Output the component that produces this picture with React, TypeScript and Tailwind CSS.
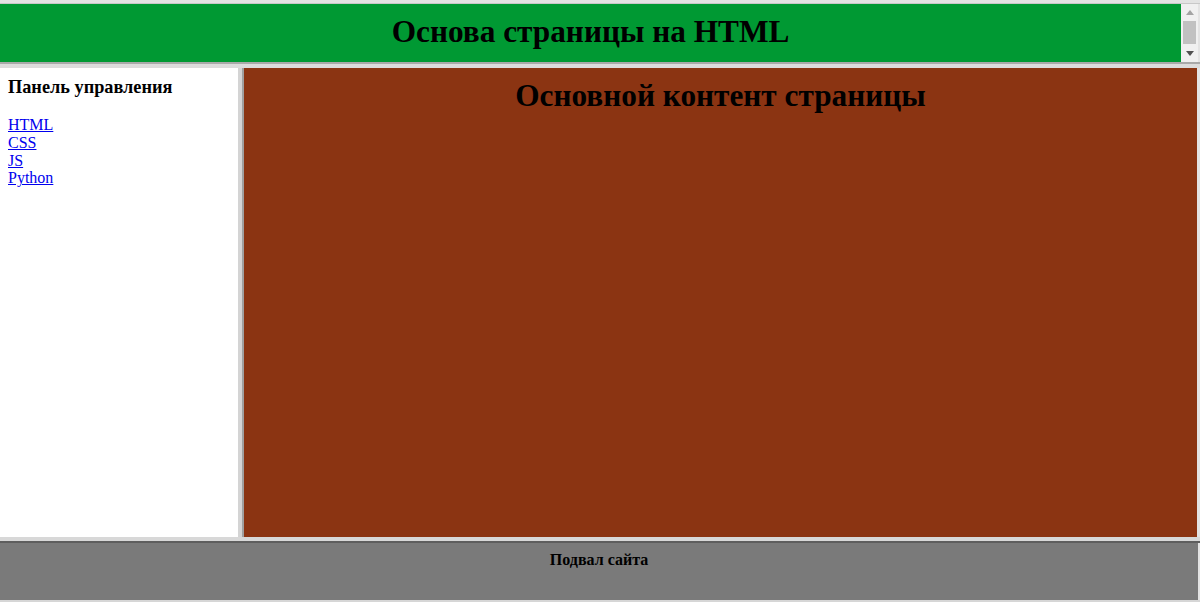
import React from 'react';

const LINKS = ['HTML', 'CSS', 'JS', 'Python'];

const serif = { fontFamily: '"Liberation Serif", "Times New Roman", serif' };

/**
 * Fake classic scrollbar for the header frame
 */
const FrameScrollbar: React.FC = () => (
    <div className="relative flex h-full w-[17px] flex-col items-center bg-[#f0f0f0]">
        <div className="flex h-[17px] w-full items-center justify-center">
            <svg width="8" height="5" viewBox="0 0 8 5">
                <path d="M0 5 L4 0 L8 5 Z" fill="#a3a3a3" />
            </svg>
        </div>
        <div className="h-[23px] w-[13px] bg-[#c1c1c1]" />
        <div className="flex flex-1 items-end justify-center pb-[6px]">
            <svg width="8" height="5" viewBox="0 0 8 5">
                <path d="M0 0 L8 0 L4 5 Z" fill="#505050" />
            </svg>
        </div>
    </div>
);

export default function App() {
    return (
        <div className="flex h-[602px] w-[1200px] flex-col bg-[#e3e3e3]" style={serif}>
            {/* top edge */}
            <div className="h-[4px] border-b border-[#c8c8c8]" />

            {/* header frame */}
            <div className="mr-[2px] flex h-[58px]">
                <div className="flex-1 bg-[#009933] pt-[9.5px] text-center">
                    <h1 className="text-[31.3px] font-bold leading-[36.8px] text-black">Основа страницы на HTML</h1>
                </div>
                <FrameScrollbar />
            </div>

            {/* horizontal divider */}
            <div className="h-[6px] border-t-2 border-[#a9a9a9] bg-[#dcdcdc]" />

            {/* middle frames */}
            <div className="mr-[3px] flex h-[469px]">
                <div className="w-[238px] bg-white px-[8px] pt-[9px]">
                    <h3 className="mb-[17.7px] text-[18.3px] font-bold leading-[21.5px] text-black">Панель управления</h3>
                    <div className="text-[16px] leading-[17.7px]">
                        {LINKS.map(l => (
                            <React.Fragment key={l}>
                                <a href="#" className="text-[#0000ee] underline">{l}</a>
                                <br />
                            </React.Fragment>
                        ))}
                    </div>
                </div>
                <div className="w-[6px] border-r-2 border-[#a0a0a0] bg-[#d4d4d4]" />
                <div className="flex-1 bg-[#8b3412] pt-[9.5px] text-center">
                    <h1 className="text-[31.3px] font-bold leading-[36.8px] text-black">Основной контент страницы</h1>
                </div>
            </div>

            {/* horizontal divider */}
            <div className="h-[6px] border-b-2 border-[#5e5e5e] bg-[#d8d8d8]" />

            {/* footer frame */}
            <div className="mr-[2px] h-[57px] bg-[#7a7a7a] pt-[8px] text-center">
                <p className="text-[16px] font-bold leading-[1.15] text-black">Подвал сайта</p>
            </div>

            {/* bottom edge */}
            <div className="h-[2px] bg-[#d6d6d6]" />
        </div>
    );
}
